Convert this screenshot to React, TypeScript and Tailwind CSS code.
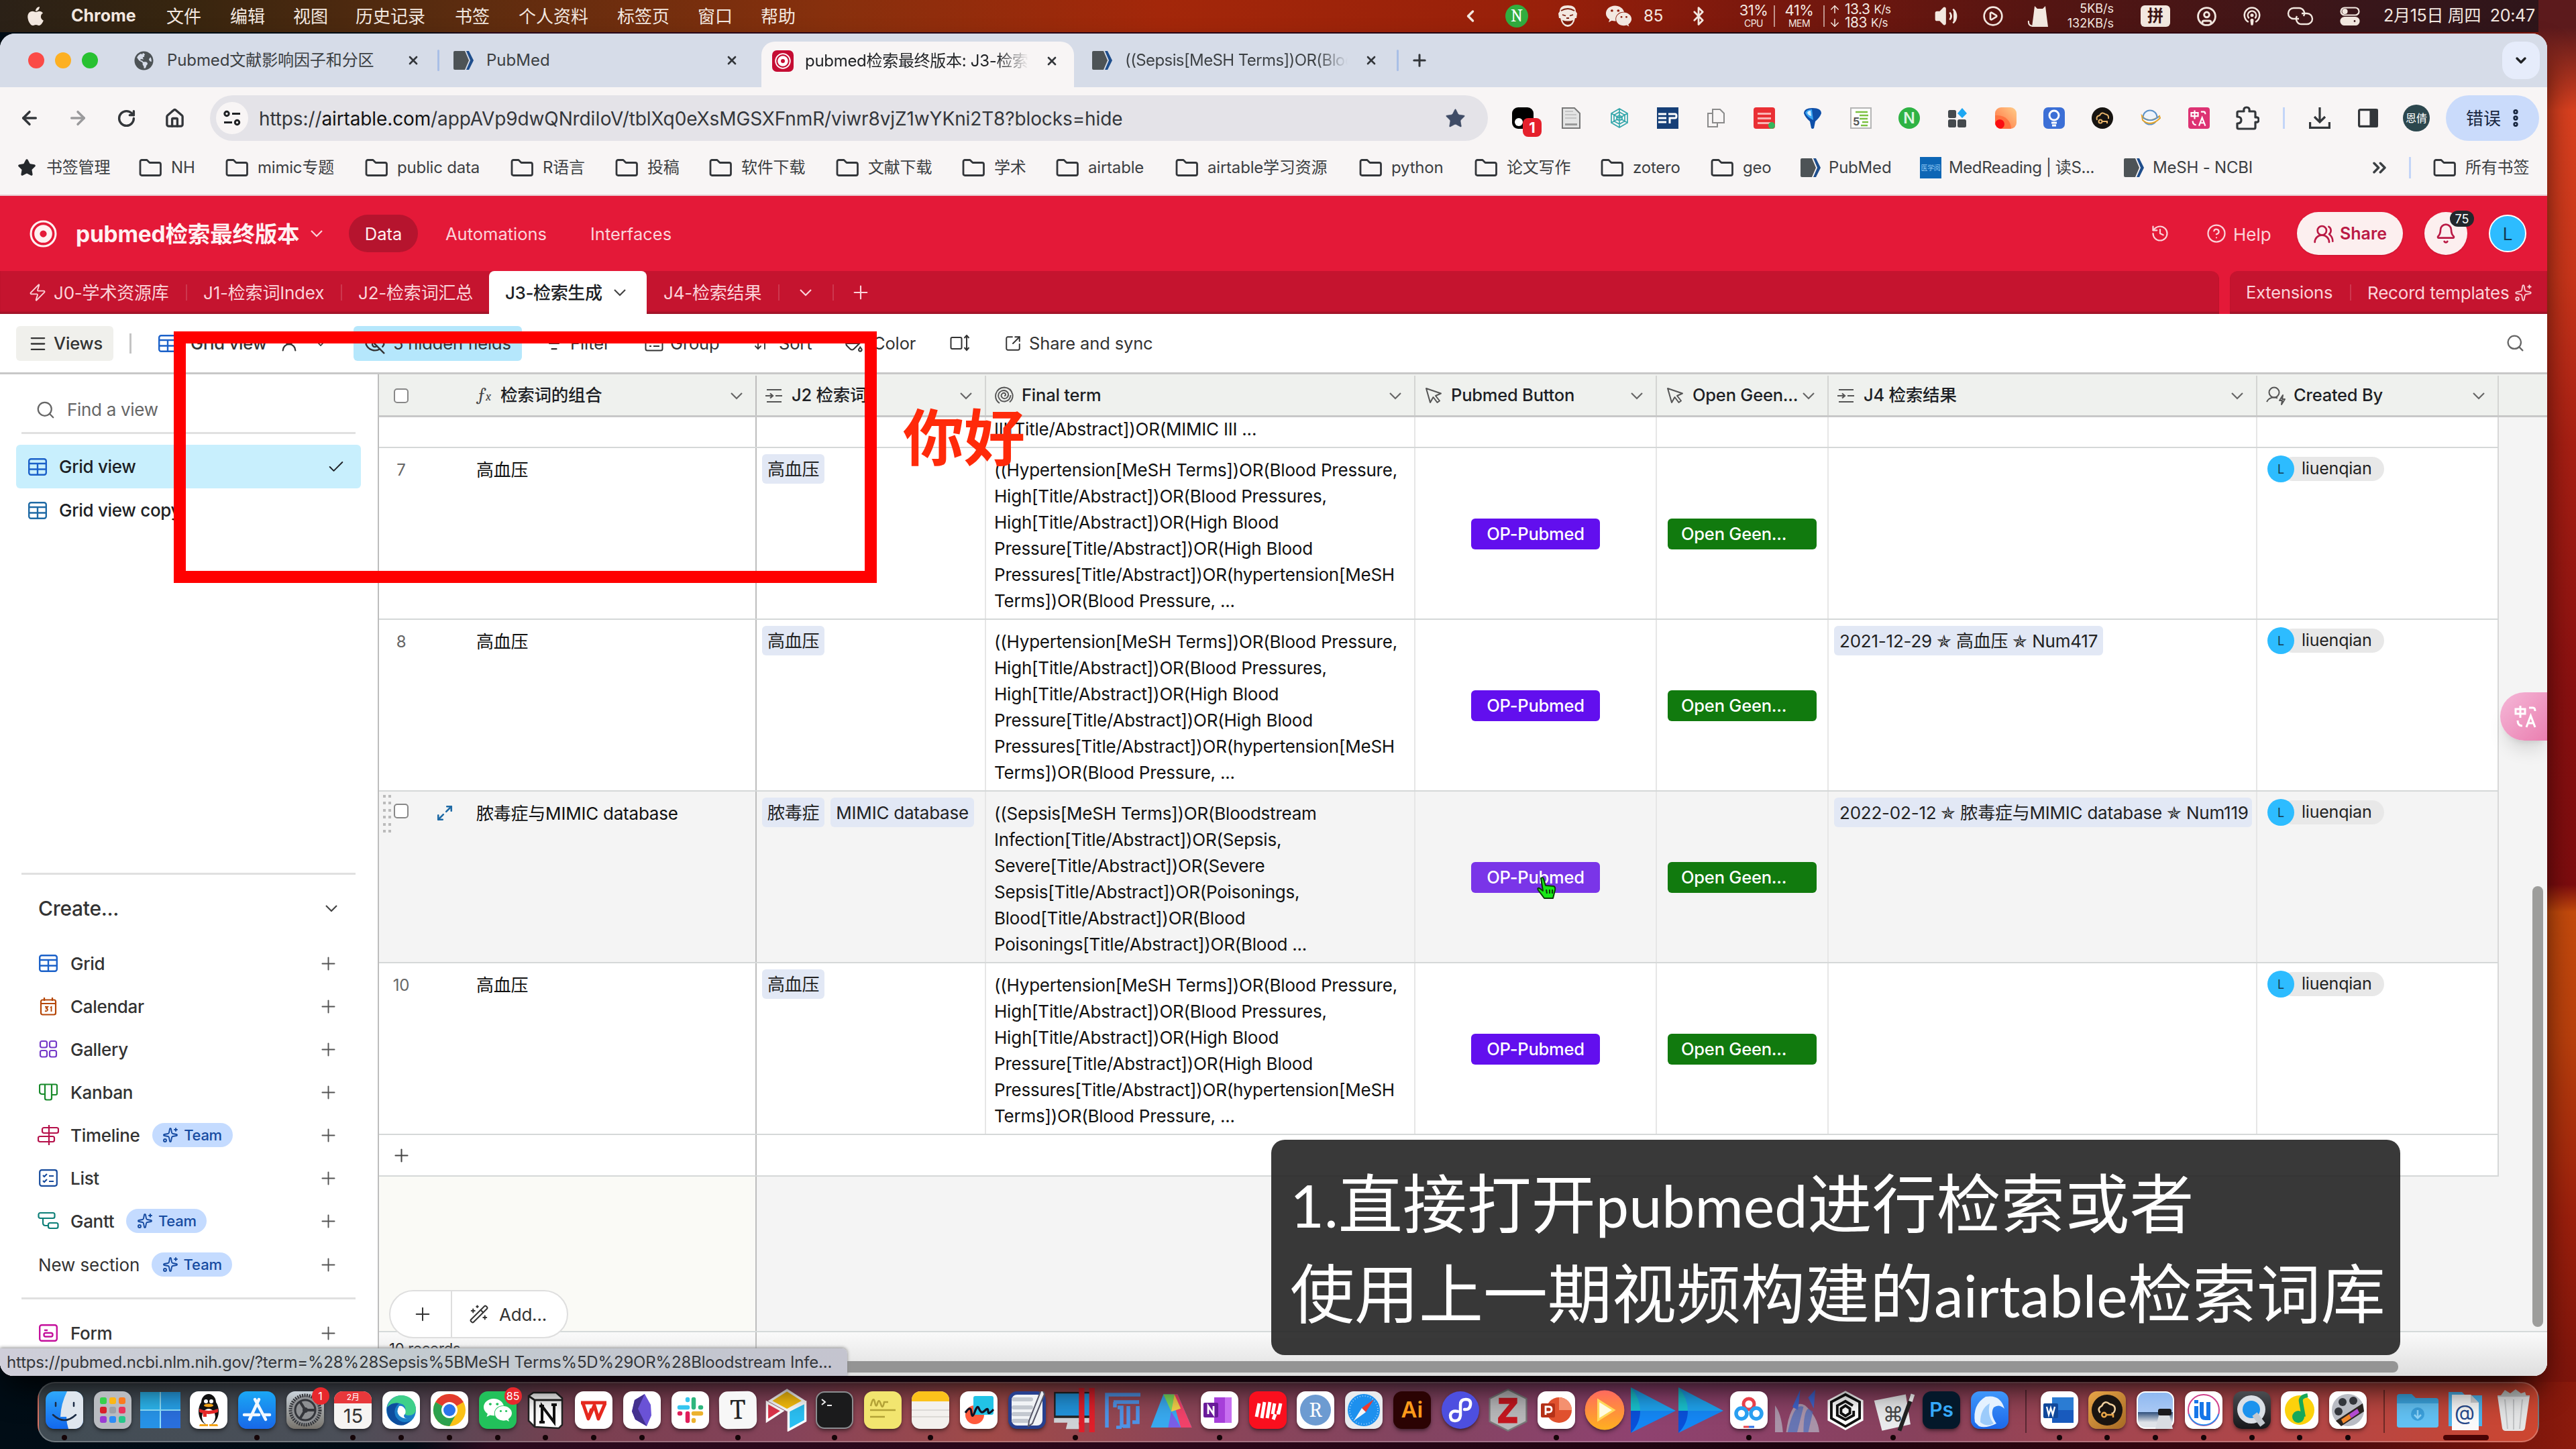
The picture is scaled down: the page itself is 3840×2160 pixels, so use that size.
import React from "react";
import {
  ArrowLeft, ArrowRight, RotateCw, House, Star, ChevronDown, ChevronLeft, ChevronsRight, Plus, X, Search,
  Check, Menu, EllipsisVertical, Bluetooth, Volume2, CirclePlay, CircleUser,
  History, CircleHelp, UsersRound, Bell, Zap, Sparkles, EyeOff, ListFilter, ArrowDownUp, PaintBucket,
  SquareArrowOutUpRight, UserRound, WandSparkles, Maximize2, ArrowUp, ArrowDown, Podcast,
} from "lucide-react";
import { FaApple, FaWeixin, FaGlobeAmericas } from "react-icons/fa";

type Kids = { children?: React.ReactNode };

/* ---------- small shared drawings ---------- */

const Box = ({ c, children }: { c: string } & Kids) => (
  <div className={"flex shrink-0 items-center justify-center " + c}>{children}</div>
);

const NcbiMark = () => (
  <svg viewBox="0 0 32 28" className="h-7 w-8 shrink-0">
    <path d="M1 2q0-2 2-2h15l6 14-6 14H3q-2 0-2-2z" fill="#4d5356" />
    <path d="M20 0h4l7 14-7 14h-4l6-14z" fill="#1f4e8c" />
  </svg>
);

const BaseMark = ({ c }: { c: string }) => (
  <svg viewBox="0 0 40 40" className={"shrink-0 " + c} fill="none" stroke="currentColor">
    <circle cx="20" cy="20" r="18" strokeWidth="3" />
    <circle cx="20" cy="20" r="9" strokeWidth="8" />
  </svg>
);

const GridIcon = ({ c }: { c: string }) => (
  <svg viewBox="0 0 28 26" className={"h-[26px] w-7 shrink-0 " + c} fill="none" stroke="currentColor" strokeWidth="2.4">
    <rect x="1.2" y="1.2" width="25.6" height="23.6" rx="3" />
    <path d="M1 8h26M1 16.5h26M14 8v17" />
  </svg>
);

const CalendarIcon = () => (
  <svg viewBox="0 0 28 28" className="size-7 shrink-0 text-[#b54708]" fill="none" stroke="currentColor" strokeWidth="2.2">
    <rect x="3" y="4.500" width="22" height="22" rx="2.500" />
    <path d="M3 10h22M8 1v5M20 1v5" />
    <path d="M9 15h4l-2 2.500q3 .5 1.500 3-1 1.200-3.500.5M17 16l1.500-1v7" strokeWidth="1.900" />
  </svg>
);

const GalleryIcon = () => (
  <svg viewBox="0 0 28 28" className="size-7 shrink-0 text-[#7438c8]" fill="none" stroke="currentColor" strokeWidth="2.200">
    <rect x="2" y="2" width="10" height="9.500" rx="2.500" />
    <rect x="16" y="2" width="10" height="9.500" rx="2.500" />
    <rect x="2" y="16" width="10" height="9.500" rx="2.500" />
    <rect x="16" y="16" width="10" height="9.500" rx="2.500" />
  </svg>
);

const KanbanIcon = () => (
  <svg viewBox="0 0 28 26" className="h-[26px] w-7 shrink-0 text-[#188a2a]" fill="none" stroke="currentColor" strokeWidth="2.200">
    <path d="M3 1.500h22q2 0 2 2V15q0 2-2 2h-5M9 16H5q-4 0-4-4V3.500q0-2 2-2" />
    <path d="M9 1.500V22q0 2.500 2.500 2.500h5Q19 24.500 19 22V1.500" />
  </svg>
);

const TimelineIcon = () => (
  <svg viewBox="0 0 32 32" className="size-8 shrink-0 text-[#b5104a]" fill="none" stroke="currentColor" strokeWidth="2.200">
    <path d="M17 1v30" />
    <rect x="7" y="5" width="24" height="8" rx="2.500" />
    <rect x="1" y="18" width="24" height="8" rx="2.500" />
  </svg>
);

const ListIcon = () => (
  <svg viewBox="0 0 28 26" className="h-[26px] w-7 shrink-0 text-[#164a9c]" fill="none" stroke="currentColor" strokeWidth="2.200">
    <rect x="1.200" y="1.200" width="25.600" height="23.600" rx="3" />
    <path d="M6 9l2 2 4-4M6 17l2 2 4-4M15 10h7M15 18h7" />
  </svg>
);

const GanttIcon = () => (
  <svg viewBox="0 0 32 28" className="h-7 w-8 shrink-0 text-[#0d7f78]" fill="none" stroke="currentColor" strokeWidth="2.200">
    <rect x="1.500" y="2" width="24" height="8" rx="2.500" />
    <rect x="16" y="17" width="14.500" height="8" rx="2.500" />
    <path d="M8 10v7q0 4 4 4h4" />
  </svg>
);

const FormIcon = () => (
  <svg viewBox="0 0 28 26" className="h-[26px] w-7 shrink-0 text-[#c4109c]" fill="none" stroke="currentColor" strokeWidth="2.400">
    <rect x="1.200" y="1.200" width="25.600" height="23.600" rx="3" />
    <path d="M8 9h5" />
    <rect x="7.500" y="13" width="13" height="5.500" rx="2.500" />
  </svg>
);

const LookupIcon = () => (
  <svg viewBox="0 0 28 24" className="h-6 w-7 shrink-0" fill="none" stroke="currentColor" strokeWidth="2.200">
    <path d="M1 12h10M8 8.500l4 3.500-4 3.500M3 3h22M16 12h10M3 21h22" />
  </svg>
);

const SpiralIcon = () => (
  <svg viewBox="0 0 28 28" className="size-7 shrink-0" fill="none" stroke="currentColor" strokeWidth="1.900">
    <path d="M14 14q2.500 0 2-2.500-1-2.500-4-1.500-3.500 2-2 5.500 2.500 4 7 2 4.500-3 2.500-8Q16 4.500 10.500 6.500 4 9.500 5.500 16q2.500 7 9.500 6.500 8-1.500 8.500-9.500M7 25Q-.5 20 1.500 11 4.500 2 14 1.500 24 2 26.500 12q1 7-4.500 11.500" />
  </svg>
);

const PointerIcon = () => (
  <svg viewBox="0 0 26 26" className="size-[26px] shrink-0" fill="none" stroke="currentColor" strokeWidth="2" strokeLinejoin="round">
    <path d="M2 2l6 21 4.500-8 6 8 3.500-2.500-6-7.500 8-3.500z" />
  </svg>
);

const CreatorIcon = () => (
  <svg viewBox="0 0 30 30" className="size-[30px] shrink-0" fill="none" stroke="currentColor" strokeWidth="2" strokeLinejoin="round">
    <circle cx="12" cy="10" r="7.500" />
    <path d="M1 24q3-6.500 11-6.500 3 0 5 1" />
    <path d="M25 14l-5 8h4l-1 6 5-8h-4z" />
  </svg>
);

const GroupIcon = () => (
  <svg viewBox="0 0 28 26" className="h-[26px] w-7 shrink-0" fill="none" stroke="currentColor" strokeWidth="2">
    <rect x="1.500" y="2.500" width="25" height="21" rx="2.500" />
    <path d="M7 9h3M13 9h9M7 17h3M13 17h9" />
  </svg>
);

const Chev = ({ c }: { c: string }) => (
  <svg viewBox="0 0 20 12" className={"h-3 w-5 shrink-0 " + c} fill="none" stroke="currentColor" strokeWidth="2.200">
    <path d="M2 2l8 8 8-8" />
  </svg>
);

const BookFolder = () => (
  <svg viewBox="0 0 34 26" className="h-[26px] w-[34px] shrink-0" fill="none" stroke="#33363a" strokeWidth="2.800" strokeLinejoin="round">
    <path d="M2 4q0-2.500 2.500-2.500H12l4 4h14q2.500 0 2.500 2.500v14q0 2.500-2.500 2.500H4.500Q2 24.500 2 22z" />
  </svg>
);

const TranslateMark = ({ c }: { c: string }) => (
  <svg viewBox="0 0 36 36" className={"shrink-0 " + c} fill="none" stroke="#fff" strokeWidth="3">
    <path d="M2 7h14v7H2zM9 2v18M22 5h6q3 0 3 5M5 24q0 8 7 8M18 34l6.500-17L31 34M20 28h9" />
  </svg>
);

/* ---------- system menu bar ---------- */

const menus: [string, string][] = [
  ["文件", "w-[95px]"], ["编辑", "w-[94px]"], ["视图", "w-[93px]"], ["历史记录", "w-[148px]"], ["书签", "w-[95px]"],
  ["个人资料", "w-[147px]"], ["标签页", "w-[120px]"], ["窗口", "w-[94px]"], ["帮助", "w-[95px]"],
];

const MenuBar = () => (
  <div className="flex h-12 shrink-0 items-center overflow-hidden bg-[linear-gradient(90deg,#2b2117_0%,#37250f_7%,#5c2c0f_18%,#87300d_32%,#a3270a_45%,#98200a_60%,#7b180d_68%,#551512_79%,#38161a_92%,#2c151a_100%)] text-[26px] whitespace-nowrap text-[#f3e8e0]">
    <Box c="w-[106px]"><FaApple className="size-8" /></Box>
    <div className="w-[142px] text-[25px] font-bold">Chrome</div>
    {menus.map(([t, w]) => <div key={t} className={"shrink-0 " + w}>{t}</div>)}
    <div className="w-[939px] shrink-0" />
    <Box c="w-12"><ChevronLeft className="size-7" strokeWidth={3} /></Box>
    <Box c="w-[90px]"><Box c="size-[34px] rounded-full bg-[#31ad3f] font-serif text-[26px] text-white">N</Box></Box>
    <Box c="w-[62px]">
      <svg viewBox="0 0 32 34" className="h-[34px] w-8">
        <path d="M4 10Q4 1 16 1t12 9l2 3-1 7h-2q-2 12-11 13Q7 32 5 20H3l-1-7z" fill="#f3e8e0" />
        <path d="M6 9Q16 3 26 9M8 15l5 1.500M24 15l-5 1.500M14 20h4" stroke="#7a1c0c" strokeWidth="1.800" fill="none" />
        <path d="M8 23q8 3 16 0-2 7-8 7t-8-7z" fill="#7a1c0c" />
      </svg>
    </Box>
    <Box c="w-[90px]"><FaWeixin className="size-10" /></Box>
    <div className="-ml-2 w-[50px] text-[24px]">85</div>
    <Box c="w-16"><Bluetooth className="size-[30px]" strokeWidth={2.2} /></Box>
    <div className="ml-5 flex w-[60px] flex-col items-center text-[22px] leading-[21px] tracking-[-0.5px]"><span>31%</span><span className="text-[14px] leading-[17px]">CPU</span></div>
    <div className="h-8 w-0.5 bg-[#f3e8e0]/60" />
    <div className="flex w-[72px] flex-col items-center text-[22px] leading-[21px] tracking-[-0.5px]"><span>41%</span><span className="text-[14px] leading-[17px]">MEM</span></div>
    <div className="h-8 w-0.5 bg-[#f3e8e0]/60" />
    <div className="ml-1.5 w-[133px] text-[21px] leading-5 tracking-[-0.5px]">
      <div className="flex items-center gap-1.5"><ArrowUp className="size-[18px]" />13.3 <span className="text-[17px]">K/s</span></div>
      <div className="flex items-center gap-1.5"><ArrowDown className="size-[18px]" />183 <span className="text-[17px]">K/s</span></div>
    </div>
    <Box c="w-[84px]"><Volume2 className="size-9" fill="currentColor" strokeWidth={1.800} /></Box>
    <Box c="w-14"><CirclePlay className="size-8" strokeWidth={2} /></Box>
    <Box c="w-20">
      <svg viewBox="0 0 34 34" className="size-[34px]" fill="#f3e8e0"><path d="M11 2l4 4h8l4-4 2 16 2 15H7l2-15z" /><path d="M8 32Q1 31 2 24" fill="none" stroke="#f3e8e0" strokeWidth="2" /></svg>
    </Box>
    <div className="w-[72px] text-right text-[18px] leading-[22px]"><div>5KB/s</div><div>132KB/s</div></div>
    <Box c="ml-10 h-8 w-11 rounded-md bg-[#f3e8e0] text-[24px] font-bold text-[#3a1413]">拼</Box>
    <Box c="ml-[18px] w-[72px]"><CircleUser className="size-[31px]" strokeWidth={2.200} /></Box>
    <Box c="w-16"><Podcast className="size-[30px]" strokeWidth={2} /></Box>
    <Box c="w-20">
      <svg viewBox="0 0 44 28" className="h-7 w-11" fill="none" stroke="#f3e8e0" strokeWidth="2.400">
        <path d="M20 18h-8a8 8 0 0 1 0-16h8a8 8 0 0 1 7 12" />
        <path d="M24 10h8a8 8 0 0 1 0 16h-8a8 8 0 0 1-7-12" />
      </svg>
    </Box>
    <Box c="w-[68px]">
      <svg viewBox="0 0 30 28" className="h-7 w-[30px]" fill="none" stroke="#f3e8e0" strokeWidth="2.200">
        <rect x="1.500" y="1.500" width="27" height="11" rx="5.500" /><circle cx="7.500" cy="7" r="3" fill="#f3e8e0" />
        <rect x="1.500" y="16" width="27" height="11" rx="5.500" fill="#f3e8e0" /><circle cx="22" cy="21.500" r="2.500" fill="#38161a" />
      </svg>
    </Box>
    <div className="ml-4 text-[25px] tracking-[-0.3px]">2月15日 周四&nbsp; 20:47</div>
  </div>
);

/* ---------- browser chrome ---------- */

const CloseX = () => <X className="size-5 shrink-0 text-[#33363a]" strokeWidth={3.200} />;

const TabStrip = () => (
  <div className="flex h-20 shrink-0 items-center bg-[#d6dce8] text-[24px] whitespace-nowrap text-[#3c4043]">
    <div className="flex w-[200px] gap-4 pl-[42px]">
      <div className="size-6 rounded-full bg-[#fb4b47]" />
      <div className="size-6 rounded-full bg-[#fdb022]" />
      <div className="size-6 rounded-full bg-[#28c131]" />
    </div>
    <FaGlobeAmericas className="size-[29px] text-[#4d5356]" />
    <div className="ml-5 w-[357px] tracking-[-0.1px]">Pubmed文献影响因子和分区</div>
    <CloseX />
    <div className="ml-[26px] h-8 w-[3px] rounded bg-[#a9bfe6]" />
    <div className="ml-[20px]"><NcbiMark /></div>
    <div className="ml-[18px] w-[356px]">PubMed</div>
    <CloseX />
    <div className="ml-[34px] flex h-[68px] w-[466px] items-center self-end rounded-t-[20px] bg-[#f8f5f5] pb-2.5 text-[#1f2124]">
      <Box c="ml-4 size-8 rounded-[7px] bg-[#c50d33]"><BaseMark c="size-6 text-white" /></Box>
      <div className="ml-[17px] w-[334px] overflow-hidden bg-[linear-gradient(90deg,#1f2124_86%,transparent)] bg-clip-text tracking-[-0.3px] text-transparent">pubmed检索最终版本: J3-检索生成</div>
      <div className="ml-6"><CloseX /></div>
    </div>
    <div className="ml-[26px]"><NcbiMark /></div>
    <div className="ml-[18px] w-[332px] overflow-hidden bg-[linear-gradient(90deg,#3c4043_86%,transparent)] bg-clip-text tracking-[-0.6px] text-transparent">((Sepsis[MeSH Terms])OR(Bloodstream</div>
    <div className="ml-[25px]"><CloseX /></div>
    <div className="ml-[28px] h-8 w-[3px] rounded bg-[#a9bfe6]" />
    <Plus className="ml-[17px] size-7 text-[#33363a]" strokeWidth={2.600} />
    <div className="grow" />
    <Box c="mr-[11px] size-14 rounded-[20px] bg-[#e6ecfb]"><ChevronDown className="size-6 text-[#1f2124]" strokeWidth={3.400} /></Box>
  </div>
);

const extIcons: React.ReactNode[] = [
  <div className="relative size-8 rounded-[9px] bg-black"><div className="absolute bottom-1 left-1 size-3 rounded-full bg-white" /><div className="absolute top-4 left-4 flex h-7 w-7 items-center justify-center rounded-lg bg-[#e5202c] text-[22px] font-bold text-white">1</div></div>,
  <svg viewBox="0 0 28 32" className="h-8 w-7"><path d="M1 1h18l8 8v22H1z" fill="#e4e4e4" stroke="#777" strokeWidth="2" /><path d="M5 24h18v3H5z" fill="#999" /><path d="M5 6h12M5 11h17M5 16h17" stroke="#c4c4c4" strokeWidth="2" /></svg>,
  <svg viewBox="0 0 32 32" className="size-8" fill="none" stroke="#35a7ab" strokeWidth="1.700"><path d="M16 2l12 7v14l-12 7-12-7V9zM16 7l8 4.500v9L16 25l-8-4.500v-9zM16 12l4 2v4l-4 2-4-2v-4zM16 2v28M4 9l24 14M28 9L4 23" /></svg>,
  <Box c="size-8 bg-[#163f77]"><svg viewBox="0 0 32 32" className="size-8" fill="none" stroke="#fff" strokeWidth="3"><path d="M2 10h12M2 16h12M2 22h12M17 10h10q2 0 2 3t-2 3H19v8" /></svg></Box>,
  <svg viewBox="0 0 26 30" className="h-[30px] w-[26px]" fill="#f8f5f5" stroke="#8a8a8a" strokeWidth="2"><path d="M1 8h14v20H1z" /><path d="M8 2h11l6 6v14H8z" /></svg>,
  <Box c="relative size-8 rounded bg-[#ea2f34]"><div className="flex flex-col gap-1"><div className="h-[3px] w-5 bg-[#f9b4b4]" /><div className="h-[3px] w-5 bg-[#f9b4b4]" /><div className="h-[3px] w-5 bg-[#f9b4b4]" /></div><div className="absolute right-0 bottom-0 size-2.5 rounded-full bg-[#36b55c]" /></Box>,
  <svg viewBox="0 0 30 32" className="h-8 w-[30px]"><path d="M2 9q0-8 13-8t13 8q-2 6-9 12l-2 10q-2 2-4 0l-2-10Q4 15 2 9z" fill="#0f4fa8" /><path d="M4 8q2-5 10-5l2 16Q6 14 4 8z" fill="#3aa5f4" /><path d="M7 8q1-3 5-3l1 8Q8 12 7 8z" fill="#d5eeff" /></svg>,
  <svg viewBox="0 0 32 32" className="size-8"><rect x="1" y="1" width="30" height="30" fill="#fff" stroke="#b5b5b5" strokeWidth="2" /><path d="M8 7h18M14 12h13M14 17h12M18 22h9M16 27h10" stroke="#7cc142" strokeWidth="2.600" /><text x="4" y="27" fontSize="16" fontWeight="700" fill="#555">5</text></svg>,
  <Box c="size-8 rounded-full bg-[#2fb344] text-[23px] font-semibold text-[#dff5e2]">N</Box>,
  <svg viewBox="0 0 30 30" className="size-[30px]" fill="#45494d"><rect x="1" y="3" width="12" height="12" rx="2.500" /><rect x="1" y="17" width="12" height="12" rx="2.500" /><rect x="15" y="17" width="13" height="12" rx="2.500" /><path d="M22 0l7 8-7 7-7-7z" fill="#1ea7f2" /></svg>,
  <div className="relative size-8 overflow-hidden rounded-[9px] bg-[linear-gradient(45deg,#ff6a3c,#ffce8a)]"><div className="absolute bottom-0 left-0 h-5 w-6 rounded-tr-full bg-[#ff7340]" /><div className="absolute bottom-0 left-0 size-3.5 rounded-full bg-[#fb0d12]" /></div>,
  <Box c="size-8 rounded-[7px] bg-[#3c6fd6]"><svg viewBox="0 0 24 26" className="h-[26px] w-6" fill="none" stroke="#fff" strokeWidth="3"><circle cx="12" cy="9" r="7" /><path d="M8 20h8M9 24h6" /></svg></Box>,
  <Box c="size-8 rounded-full bg-[#171411]"><svg viewBox="0 0 24 24" className="size-6" fill="none" stroke="#e8b46a" strokeWidth="2"><path d="M4 15q-2-6 4-7 3-6 8-2 6 1 5 7" /><circle cx="9" cy="17" r="2.500" /><path d="M12 17h7v3" /></svg></Box>,
  <svg viewBox="0 0 32 26" className="h-[26px] w-8" fill="none"><circle cx="15" cy="12" r="10.500" fill="#eef4fb" stroke="#5d93c9" strokeWidth="2" /><path d="M3 10q10 12 26 0l1 3Q16 27 4 16z" fill="#fff" stroke="#e3a42c" strokeWidth="2" /><path d="M4 12q12 9 24-1" stroke="#5d93c9" strokeWidth="2" /></svg>,
  <Box c="size-8 rounded bg-[#dd3273]"><TranslateMark c="size-[26px]" /></Box>,
  <svg viewBox="0 0 36 36" className="size-9" fill="none" stroke="#33363a" strokeWidth="3.200" strokeLinejoin="round"><path d="M3 10q0-2 2-2h8q-1-6 4-6t4 6h7q2 0 2 2v7q5-1 5 3.500T30 24v8q0 2-2 2H5q-2 0-2-2v-6q6 0 6-5t-6-5z" /></svg>,
];

const AddressBar = () => (
  <div className="flex h-[92px] shrink-0 items-center bg-[#f8f5f5] text-[#33363a]">
    <Box c="ml-2 w-[72px]"><ArrowLeft className="size-8" strokeWidth={2.600} /></Box>
    <Box c="w-[72px]"><ArrowRight className="size-8 text-[#9a9a9c]" strokeWidth={2.600} /></Box>
    <Box c="w-[72px]"><RotateCw className="size-[29px]" strokeWidth={2.800} /></Box>
    <Box c="w-[72px]"><House className="size-[31px]" strokeWidth={2.600} /></Box>
    <div className="ml-[17px] flex h-[68px] w-[1905px] items-center rounded-full bg-[#e4e3e8] text-[28px] whitespace-nowrap">
      <Box c="ml-[9px] size-12 rounded-full bg-[#f8f5f5]">
        <svg viewBox="0 0 26 24" className="h-6 w-[26px]" fill="none" stroke="#1f2124" strokeWidth="3"><circle cx="5" cy="5.500" r="3.200" /><path d="M13 5.500h12M1 18.500h12" /><circle cx="20.500" cy="18.500" r="3.200" /></svg>
      </Box>
      <div className="ml-4 w-[1767px] pt-0.5 tracking-[-0.12px]">https://<span className="text-[#111]">airtable.com</span>/appAVp9dwQNrdiIoV/tblXq0eXsMGSXFnmR/viwr8vjZ1wYKni2T8?blocks=hide</div>
      <Star className="size-[33px] text-[#3f4c66]" fill="currentColor" strokeWidth={0.500} />
    </div>
    <div className="ml-4 flex">
      {extIcons.map((n, i) => <Box key={i} c="h-12 w-[72px]">{n}</Box>)}
    </div>
    <div className="ml-[17px] h-8 w-[3px] bg-[#c3d5f8]" />
    <Box c="ml-4 w-[72px]">
      <svg viewBox="0 0 32 32" className="size-8" fill="none" stroke="#33363a" strokeWidth="3.200"><path d="M16 0v21M8 14l8 8 8-8M1.600 22v8.400h28.800V22" /></svg>
    </Box>
    <Box c="w-[72px]">
      <svg viewBox="0 0 30 28" className="h-7 w-[30px]" fill="none" stroke="#33363a" strokeWidth="3.200"><rect x="1.600" y="1.600" width="26.800" height="24.800" rx="2" /><path d="M19 2h9v24h-9z" fill="#33363a" /></svg>
    </Box>
    <Box c="w-[72px]"><Box c="size-10 rounded-full bg-[#2c474e] text-[16px] text-white">恩倩</Box></Box>
    <div className="ml-2 flex h-[68px] w-[139px] items-center rounded-full bg-[#cadbfb] pl-[30px] text-[26px] whitespace-nowrap text-[#17263f]">
      错误<EllipsisVertical className="ml-1.5 size-8" strokeWidth={3.500} />
    </div>
  </div>
);

const bookmarks: [string, string][] = [
  ["NH", "w-[129px]"], ["mimic专题", "w-[208px]"], ["public data", "w-[217px]"], ["R语言", "w-[156px]"], ["投稿", "w-[140px]"],
  ["软件下载", "w-[189px]"], ["文献下载", "w-[188px]"], ["学术", "w-[140px]"], ["airtable", "w-[178px]"],
  ["airtable学习资源", "w-[274px]"], ["python", "w-[172px]"], ["论文写作", "w-[188px]"], ["zotero", "w-[164px]"], ["geo", "w-[133px]"],
];

const Bookmarks = () => (
  <div className="flex h-[70px] shrink-0 items-center border-b-2 border-[#e9ccd2] bg-[#f8f5f5] pb-3 text-[24px] tracking-[-0.2px] whitespace-nowrap text-[#3c4043]">
    <Star className="ml-[26px] size-7 text-[#25282c]" fill="currentColor" />
    <div className="ml-[15px] w-[138px]">书签管理</div>
    {bookmarks.map(([t, w]) => (
      <div key={t} className={"flex shrink-0 items-center gap-[14px] " + w}><BookFolder />{t}</div>
    ))}
    <div className="flex w-[179px] shrink-0 items-center gap-[11px]"><NcbiMark />PubMed</div>
    <div className="flex w-[303px] shrink-0 items-center gap-[11px] tracking-[-0.4px]"><Box c="size-8 bg-[#0d66b5] text-[10px] text-[#8ec6f3]">医学阅</Box>MedReading | 读S...</div>
    <div className="flex w-[366px] shrink-0 items-center gap-[12px]"><NcbiMark />MeSH - NCBI</div>
    <ChevronsRight className="size-8" strokeWidth={2.600} />
    <div className="mr-[33px] ml-[28px] h-8 w-[3px] bg-[#c3d5f8]" />
    <BookFolder /><span className="ml-3.5">所有书签</span>
  </div>
);

/* ---------- base header ---------- */

const BaseHeader = () => (
  <div className="flex h-28 shrink-0 items-center bg-[#e41938] text-[25px] whitespace-nowrap text-[#fbd3d9]">
    <BaseMark c="ml-11 size-[41px] text-[#fff0f1]" />
    <div className="ml-7 w-[349px] pt-0.5 text-[33.5px] font-bold tracking-[-0.2px] text-[#fff0f1]">pubmed检索最终版本</div>
    <Chev c="text-[#fbd3d9]" />
    <Box c="ml-[38px] h-14 w-[103px] rounded-full bg-[#b6142e] pt-0.5 text-[25.5px] text-[#fff0f1]">Data</Box>
    <div className="ml-[41px] w-[216px] pt-0.5 text-[25.5px]">Automations</div>
    <div className="pt-0.5 text-[25.5px]">Interfaces</div>
    <div className="grow" />
    <History className="size-7" strokeWidth={1.900} />
    <CircleHelp className="ml-[55px] size-[30px]" strokeWidth={1.800} />
    <div className="ml-2.5 w-[95px] pt-0.5 text-[26px]">Help</div>
    <Box c="h-16 w-[158px] rounded-full bg-[#fcefef] pt-0.5 font-semibold text-[#ba1a45] shadow">
      <UsersRound className="mr-2 size-8" strokeWidth={2} />Share
    </Box>
    <Box c="relative ml-8 size-16 rounded-full bg-[#fcefef] text-[#ba1a45] shadow">
      <Bell className="size-8" strokeWidth={2} />
      <Box c="absolute -top-0.5 -right-2.5 h-6 w-9 rounded-full bg-[#23272c] text-[18px] text-white">75</Box>
    </Box>
    <Box c="mr-[31px] ml-8 size-14 rounded-full border-2 border-white bg-[#2dbcff] text-[26px] text-[#143a50]">L</Box>
  </div>
);

const Vbar = ({ c }: { c: string }) => <div className={"h-6 w-0.5 shrink-0 bg-white/15 " + c} />;

const TableTabs = () => (
  <div className="flex h-16 shrink-0 bg-[#e41938] text-[26px] tracking-[-0.2px] whitespace-nowrap text-[#fbd3d9]">
    <div className="flex w-[3308px] items-center rounded-tr-xl bg-[#c5142f] shadow-[inset_0_-4px_3px_-1px_#9c1428]">
      <Zap className="ml-[42px] size-7" strokeWidth={1.600} />
      <div className="ml-2.5 w-[197px]">J0-学术资源库</div><Vbar c="" />
      <div className="ml-[24px] w-[205px]">J1-检索词Index</div><Vbar c="" />
      <div className="ml-6 w-[195px]">J2-检索词汇总</div>
      <div className="flex h-full w-[235px] items-center rounded-t-lg bg-white pl-6 font-medium tracking-[-0.4px] text-[#1d1f25]">
        <div className="w-[161px]">J3-检索生成</div><Chev c="text-[#444]" />
      </div>
      <div className="ml-[25px] w-[171px]">J4-检索结果</div><Vbar c="" />
      <Chev c="ml-[29px]" /><Vbar c="ml-[30px]" />
      <Plus className="ml-[24px] size-8" strokeWidth={1.600} />
    </div>
    <div className="ml-4 flex grow items-center rounded-tl-xl bg-[#c5142f] pl-6 shadow-[inset_0_-4px_3px_-1px_#9c1428]">
      <div className="w-[155px] text-[25.5px]">Extensions</div><Vbar c="" />
      <div className="ml-6 w-[219px]">Record templates</div>
      <Sparkles className="size-[27px]" strokeWidth={1.600} />
    </div>
  </div>
);

const ViewBar = () => (
  <div className="flex h-[90px] shrink-0 items-center border-b-[3px] border-[#c8c8c8] bg-white text-[25.5px] tracking-[-0.15px] whitespace-nowrap text-[#333]">
    <div className="ml-6 flex h-[52px] w-[145px] items-center rounded-md bg-[#f0f0ec] pt-0.5 pl-[18px] font-medium"><Menu className="mr-[9px] size-[29px]" strokeWidth={1.900} />Views</div>
    <div className="mr-10 ml-6 h-[30px] w-[3px] bg-[#c4c4c4]" />
    <GridIcon c="text-[#1b61c9]" />
    <div className="ml-[20px] w-[133px] pt-0.5 font-medium">Grid view</div>
    <UserRound className="size-7" strokeWidth={1.900} />
    <Chev c="ml-[23px] scale-75" />
    <div className="ml-[39px] flex h-[52px] w-[251px] items-center rounded-md bg-[#b5e7fc] pt-0.5 pl-4"><EyeOff className="mr-[11px] size-8" strokeWidth={1.800} />5 hidden fields</div>
    <ListFilter className="ml-[34px] size-7" strokeWidth={1.800} /><div className="ml-2.5 w-[111px] pt-0.5">Filter</div>
    <GroupIcon /><div className="ml-2.5 w-[124px] pt-0.5">Group</div>
    <ArrowDownUp className="size-6" strokeWidth={1.800} /><div className="ml-3.5 w-[98px] pt-0.5">Sort</div>
    <PaintBucket className="size-7" strokeWidth={1.800} /><div className="ml-3.5 w-[115px] pt-0.5">Color</div>
    <svg viewBox="0 0 30 26" className="h-[26px] w-[30px]" fill="none" stroke="#333" strokeWidth="2"><rect x="1.500" y="4" width="16" height="17" rx="2" /><path d="M25 1v22M21.500 5L25 1l3.500 4M21.500 19l3.500 4 3.500-4" /></svg>
    <SquareArrowOutUpRight className="ml-[51px] size-[26px]" strokeWidth={1.800} />
    <div className="ml-[11px] pt-0.5">Share and sync</div>
    <div className="grow" />
    <Search className="mr-[33px] size-[29px] text-[#666]" strokeWidth={1.900} />
  </div>
);

/* ---------- sidebar ---------- */

const Team = () => (
  <Box c="ml-[18px] h-9 w-[120px] gap-2 rounded-full bg-[#c4dbff] text-[22px] font-medium text-[#154aa0]"><Sparkles className="size-6" strokeWidth={1.900} />Team</Box>
);

const creators: [string, React.ReactNode, boolean][] = [
  ["Grid", <GridIcon c="text-[#1b61c9]" />, false],
  ["Calendar", <CalendarIcon />, false],
  ["Gallery", <GalleryIcon />, false],
  ["Kanban", <KanbanIcon />, false],
  ["Timeline", <TimelineIcon />, true],
  ["List", <ListIcon />, false],
  ["Gantt", <GanttIcon />, true],
];

const AddPlus = () => <Plus className="mr-[58px] ml-auto size-[31px] text-[#555]" strokeWidth={1.500} />;

const Sidebar = () => (
  <div className="flex w-[565px] shrink-0 flex-col overflow-hidden border-r-2 border-[#bdbdbd] bg-white text-[26px] tracking-[-0.3px] whitespace-nowrap text-[#333]">
    <div className="mr-[33px] ml-8 flex h-[89px] shrink-0 items-center border-b-[3px] border-[#e0e0e0] pt-[19px] text-[#666]">
      <Search className="ml-[21px] size-[30px]" strokeWidth={1.800} /><span className="ml-[17px] text-[26px]">Find a view</span>
    </div>
    <div className="mt-4 ml-6 flex h-[65px] w-[514px] shrink-0 items-center rounded-md bg-[#c8effd] pl-[18px] font-medium text-[#1d1f25]">
      <GridIcon c="text-[#1b61c9]" /><span className="ml-[18px] w-[399px]">Grid view</span><Check className="size-7" strokeWidth={1.600} />
    </div>
    <div className="ml-6 flex h-[65px] shrink-0 items-center pl-[18px] font-medium text-[#1d1f25]">
      <GridIcon c="text-[#1f6aa5]" /><span className="ml-[18px]">Grid view copy</span>
    </div>
    <div className="mt-[508px] mr-[33px] ml-8 h-[3px] shrink-0 bg-[#e0e0e0]" />
    <div className="flex h-[100px] shrink-0 items-center pl-[57px] text-[30px] font-medium">Create...<Chev c="mr-[59px] ml-auto text-[#444]" /></div>
    {creators.map(([t, icon, team]) => (
      <div key={t} className="flex h-16 shrink-0 items-center pl-14 font-medium">
        <Box c="w-8">{icon}</Box><span className="ml-[17px]">{t}</span>{team && <Team />}<AddPlus />
      </div>
    ))}
    <div className="flex h-[66px] shrink-0 items-center pl-[57px] tracking-[-0.1px]">New section<Team /><AddPlus /></div>
    <div className="mt-[16px] mr-[33px] ml-8 h-[3px] shrink-0 bg-[#e0e0e0]" />
    <div className="mt-[18px] flex h-16 shrink-0 items-center pl-14 font-medium">
      <Box c="w-8"><FormIcon /></Box><span className="ml-[17px]">Form</span><AddPlus />
    </div>
  </div>
);

/* ---------- data grid ---------- */

const hyper = [
  "((Hypertension[MeSH Terms])OR(Blood Pressure,", "High[Title/Abstract])OR(Blood Pressures,", "High[Title/Abstract])OR(High Blood",
  "Pressure[Title/Abstract])OR(High Blood", "Pressures[Title/Abstract])OR(hypertension[MeSH", "Terms])OR(Blood Pressure, ...",
];
const sepsis = [
  "((Sepsis[MeSH Terms])OR(Bloodstream", "Infection[Title/Abstract])OR(Sepsis,", "Severe[Title/Abstract])OR(Severe",
  "Sepsis[Title/Abstract])OR(Poisonings,", "Blood[Title/Abstract])OR(Blood", "Poisonings[Title/Abstract])OR(Blood ...",
];

type Row = { n: string; name: string; terms: string[]; links: string[]; result?: string; hover?: boolean };
const rows: Row[] = [
  { n: "7", name: "高血压", terms: hyper, links: ["高血压"] },
  { n: "8", name: "高血压", terms: hyper, links: ["高血压"], result: "2021-12-29 ✯ 高血压 ✯ Num417" },
  { n: "9", name: "脓毒症与MIMIC database", terms: sepsis, links: ["脓毒症", "MIMIC database"], result: "2022-02-12 ✯ 脓毒症与MIMIC database ✯ Num119", hover: true },
  { n: "10", name: "高血压", terms: hyper, links: ["高血压"] },
];

const cols = "grid grid-cols-[563px_342px_640px_360px_256px_639px_360px] shrink-0 w-[3160px]";

const Head = ({ icon, t, c }: { icon: React.ReactNode; t: string; c: string }) => (
  <div className={"flex items-center border-r-2 border-[#d4d5d3] " + c}>
    <Box c="mr-3 w-7 text-[#555]">{icon}</Box><span className="font-medium">{t}</span><Chev c="mr-[18px] ml-auto text-[#666]" />
  </div>
);

const Chip = ({ children }: Kids) => (
  <div className="flex h-11 items-center overflow-hidden rounded-md bg-[#e2e8f5] px-2 text-[#222]">{children}</div>
);

const CheckSquare = () => <div className="size-[22px] rounded-[5px] border-2 border-[#888] bg-white" />;

const GridRow = ({ r }: { r: Row }) => (
  <div className={cols + " h-64 border-b-2 border-[#d5d8d8] " + (r.hover ? "bg-[#f4f4f4]" : "bg-white")}>
    <div className="flex border-r-2 border-[#bdbdbd] pt-[13px]">
      {r.hover ? (
        <>
          <div className="-mt-2 grid h-14 w-[22px] grid-cols-2 content-between gap-x-1 pr-1 pl-1.5">
            {Array.from({ length: 12 }, (_, i) => <div key={i} className="size-1 bg-[#bbb]" />)}
          </div>
          <div className="pt-[5px]"><CheckSquare /></div>
          <Maximize2 className="mt-1.5 ml-[41px] size-[26px] text-[#1f6aa5]" strokeWidth={2.400} />
          <div className="ml-[34px] leading-[39px] text-[#111]">{r.name}</div>
        </>
      ) : (
        <>
          <div className="w-[66px] text-center text-[24px] leading-[39px] text-[#666]">{r.n}</div>
          <div className="ml-[79px] leading-[39px] text-[#111]">{r.name}</div>
        </>
      )}
    </div>
    <div className="flex items-start gap-[9px] border-r-2 border-[#e6e6e6] pt-[9px] pl-2">
      {r.links.map((l) => <Chip key={l}>{l}</Chip>)}
    </div>
    <div className="border-r-2 border-[#e6e6e6] pt-[13px] pl-[12px] leading-[39px] text-[#111]">
      {r.terms.map((l) => <div key={l}>{l}</div>)}
    </div>
    <div className="flex items-center justify-center border-r-2 border-[#e6e6e6] pt-0.5">
      <Box c={"h-[46px] w-48 rounded-md pt-px text-[25.5px] font-medium text-white " + (r.hover ? "bg-[#7a35e8]" : "bg-[#620fee]")}>OP-Pubmed</Box>
    </div>
    <div className="flex items-center justify-center border-r-2 border-[#e6e6e6] pt-0.5">
      <div className="flex h-[46px] w-[222px] items-center rounded-md bg-[#117a0e] pt-px pl-5 text-[25.5px] font-medium text-white">Open Geen...</div>
    </div>
    <div className="flex items-start border-r-2 border-[#e6e6e6] pt-[9px] pr-[6px] pl-2">
      {r.result && <Chip>{r.result}</Chip>}
    </div>
    <div className="border-r-2 border-[#d8d8d8] pt-[11px] pl-[15px]">
      <div className="flex items-center">
        <Box c="z-10 size-10 rounded-full bg-[#2dbcff] text-[18px] text-[#143a50]">L</Box>
        <div className="-ml-5 flex h-9 w-[154px] items-center rounded-full bg-[#e8e8e8] pl-[31px] text-[25px] text-[#222]">liuenqian</div>
      </div>
    </div>
  </div>
);

const DataGrid = () => (
  <div className="relative flex w-[3232px] shrink-0 flex-col overflow-hidden bg-[#f4f4f4] text-[26px] tracking-[-0.22px] whitespace-nowrap text-[#1d1f25]">
    <div className="flex h-[64px] shrink-0 border-b-[3px] border-[#c8c8c8] bg-[#eff1ee]">
      <div className={cols + " pt-0.5 text-[25.5px]"}>
        <div className="flex items-center border-r-2 border-[#bdbdbd] pl-[22px]">
          <CheckSquare />
          <span className="ml-[103px] font-serif text-[27px] text-[#444] italic">ƒ<span className="text-[18px]">x</span></span>
          <span className="ml-3.5 font-medium">检索词的组合</span>
          <Chev c="mr-[18px] ml-auto text-[#666]" />
        </div>
        <Head icon={<LookupIcon />} t="J2 检索词" c="pl-3" />
        <Head icon={<SpiralIcon />} t="Final term" c="pl-[13px]" />
        <Head icon={<PointerIcon />} t="Pubmed Button" c="pl-[13px]" />
        <Head icon={<PointerIcon />} t="Open Geen..." c="pl-[13px]" />
        <Head icon={<LookupIcon />} t="J4 检索结果" c="pl-3" />
        <Head icon={<CreatorIcon />} t="Created By" c="pl-[14px]" />
      </div>
    </div>
    <div className={cols + " h-[46px] border-b-2 border-[#d5d8d8] bg-white"}>
      <div className="border-r-2 border-[#bdbdbd]" /><div className="border-r-2 border-[#e6e6e6]" />
      <div className="border-r-2 border-[#e6e6e6] pl-[12px] leading-[36px] text-[#111]">III[Title/Abstract])OR(MIMIC III ...</div>
      <div className="border-r-2 border-[#e6e6e6]" /><div className="border-r-2 border-[#e6e6e6]" /><div className="border-r-2 border-[#e6e6e6]" /><div className="border-r-2 border-[#d8d8d8]" />
    </div>
    {rows.map((r) => <GridRow key={r.n} r={r} />)}
    <div className="flex h-[62px] w-[3160px] shrink-0 border-r-2 border-b-2 border-[#d5d8d8] bg-white">
      <div className="flex w-[563px] items-center border-r-2 border-[#bdbdbd] pl-[18px]"><Plus className="size-[31px] text-[#444]" strokeWidth={1.600} /></div>
    </div>
    <div className="flex h-[232px] shrink-0 border-b-2 border-[#d5dada]"><div className="w-[563px] border-r-2 border-[#bdbdbd] bg-[#fafaf6]" /></div>
    <div className="flex grow bg-[linear-gradient(#fafafa,#dedede)]">
      <div className="w-[563px] border-r-2 border-[#bdbdbd] pt-2 pl-[15px] text-[22px]">10 records</div>
    </div>
    <div className="absolute top-[1365px] left-[15px] flex h-[72px] w-[267px] items-center rounded-full border-2 border-[#dedede] bg-white text-[26px]">
      <Box c="h-full w-[92px] border-r-2 border-[#dedede] pl-1.5"><Plus className="size-8 text-[#333]" strokeWidth={1.500} /></Box>
      <WandSparkles className="ml-[25px] size-[30px] text-[#333]" strokeWidth={1.600} />
      <span className="ml-[15px] text-[#333]">Add...</span>
    </div>
    <div className="absolute top-[763px] right-[6px] h-[657px] w-4 rounded-full bg-[#9d9d9b]" />
    <div className="absolute -left-20 bottom-[5px] h-[17px] w-[3090px] rounded-r-lg bg-[#949494]" />
    <Box c="absolute top-[474px] right-0 h-[72px] w-[70px] rounded-l-full bg-[linear-gradient(135deg,#f5b8d8,#ea7fb0)] pl-2 shadow-xl"><TranslateMark c="size-9" /></Box>
  </div>
);

/* ---------- dock ---------- */

const Tile = ({ c, children }: { c: string } & Kids) => (
  <div className={"relative flex h-[56px] w-[56px] shrink-0 items-center justify-center rounded-[13px] shadow-md shadow-black/40 " + c}>{children}</div>
);
const Svg = ({ c, v = "0 0 56 56", children }: { c?: string; v?: string } & Kids) => (
  <svg viewBox={v} className={"shrink-0 " + (c ?? "size-14")} fill="none">{children}</svg>
);
const Badge = ({ children }: Kids) => (
  <div className="absolute -top-1.5 -right-2 flex h-[26px] min-w-[26px] items-center justify-center rounded-full bg-[#e8282d] px-0.5 text-[16px] text-white">{children}</div>
);
const Arrowhead = () => (
  <Svg c="h-[70px] w-[70px]" v="0 0 70 70"><path d="M2 1l67 35H14Q12 14 2 1z" fill="#1fa3ee" /><path d="M2 69l67-33H14Q12 58 2 69z" fill="#1487f4" /><path d="M2 1q14 16 14 35H2z" fill="#19c2d0" /><path d="M2 69q14-14 14-33H2z" fill="#0a50d8" /></Svg>
);

type App = { n: React.ReactNode; dot?: boolean };
const apps: App[] = [
  { dot: true, n: <Tile c="overflow-hidden bg-[linear-gradient(#2fa8fb,#1268ee)]"><Svg><path d="M32 0h24v56H34q-3-9-3-18h-9q1-20 10-38z" fill="#dfe6ee" /><path d="M15 17v5M42 17v5M11 35q17 16 34 0" stroke="#1b2b44" strokeWidth="2.500" strokeLinecap="round" /></Svg></Tile> },
  { n: <Tile c="bg-[#b9bcc1]"><div className="grid grid-cols-3 gap-1">{["bg-[#36d14b]", "bg-[#fcb614]", "bg-[#fb7a1e]", "bg-[#d81f2a]", "bg-[#9da1a7]", "bg-[#e9355e]", "bg-[#9a3ad4]", "bg-[#2d8cf5]", "bg-[#26c78a]"].map((c) => <div key={c} className={"size-2.5 rounded-[3px] " + c} />)}</div></Tile> },
  { n: <div className="grid h-[54px] w-[60px] shrink-0 grid-cols-2 gap-0.5 rounded bg-[#8fe0fb]"><i className="bg-[#2cb6ef]" /><i className="bg-[#27a2ea]" /><i className="bg-[#2792e6]" /><i className="bg-[#2a6fdc]" /></div> },
  { n: <Tile c="bg-white"><Svg><ellipse cx="28" cy="30" rx="15" ry="20" fill="#111" /><ellipse cx="28" cy="17" rx="11" ry="13" fill="#111" /><ellipse cx="28" cy="38" rx="10" ry="12" fill="#fff" /><path d="M14 26q14 6 28 0v5q-14 6-28 0z" fill="#e32626" /><path d="M19 29h6v9h-5z" fill="#e32626" /><circle cx="24" cy="15" r="3" fill="#fff" /><circle cx="32" cy="15" r="3" fill="#fff" /><ellipse cx="28" cy="21" rx="7" ry="2.500" fill="#f5a417" /><path d="M15 49h12v3H14zM29 49h12l1 3H29z" fill="#f5a417" /></Svg></Tile> },
  { dot: true, n: <Tile c="bg-[linear-gradient(#1aa7f5,#1868e8)]"><Svg><path d="M31 12L17 42M25 12l16 30M9 35h22M39 35h8" stroke="#f2f8ff" strokeWidth="4.500" strokeLinecap="round" /></Svg></Tile> },
  { n: <Tile c="bg-[linear-gradient(#c9d2da,#77736c)]"><Svg><circle cx="28" cy="28" r="22" fill="#8d8f92" stroke="#33353a" strokeWidth="5" strokeDasharray="2 1.500" /><circle cx="28" cy="28" r="15" stroke="#33353a" strokeWidth="3" /><path d="M28 28h15M28 28l-8-13M28 28l-8 13" stroke="#33353a" strokeWidth="4" /><circle cx="28" cy="28" r="4" fill="#33353a" /></Svg><Badge>1</Badge></Tile> },
  { dot: true, n: <Tile c="flex-col overflow-hidden bg-[#f6f4f2]"><div className="h-[18px] w-full shrink-0 bg-[#e8383b] text-center text-[12px] leading-[18px] text-white">2月</div><div className="grow text-[29px] leading-[37px] text-[#333]">15</div></Tile> },
  { dot: true, n: <Tile c="bg-white"><Svg><circle cx="28" cy="28" r="22" fill="#1b7fc8" /><path d="M7 24Q12 6 30 6q18 2 20 20 0 10-12 10-7-1-4-6 2-10-8-12-12-2-19 6z" fill="#3fd08a" /><path d="M7 24q8-8 18-6-10 8-5 20 8 12 22 6-12 12-25 3Q6 40 7 24z" fill="#0d4e9e" /><path d="M25 22q-5 8 0 14 6 6 17 4-10 2-10-4 4-4 2-9-3-6-9-5z" fill="#fff" /></Svg></Tile> },
  { dot: true, n: <Tile c="bg-white"><Svg><circle cx="28" cy="28" r="24" fill="#fbc116" /><path d="M28 28L7.200 16A24 24 0 0 1 48.800 16z" fill="#e33b2e" /><path d="M7.200 16A24 24 0 0 0 28 52l10-18-10-6z" fill="#2da14d" /><circle cx="28" cy="28" r="12" fill="#fff" /><circle cx="28" cy="28" r="9" fill="#2b74ea" /></Svg></Tile> },
  { dot: true, n: <Tile c="bg-[#22c15b]"><FaWeixin className="size-11 text-white" /><Badge>85</Badge></Tile> },
  { dot: true, n: <Svg c="h-[58px] w-[56px]"><path d="M3 7l7-5h34l9 8v40l-5 5-36-2-9-9z" fill="#fff" stroke="#222" strokeWidth="2.500" /><path d="M12 13h41M3 7l9 6v40" stroke="#222" strokeWidth="3" /><path d="M23 46V22l18 24V20M19 22h7M37 20h8M19 46h8" stroke="#111" strokeWidth="4" /></Svg> },
  { dot: true, n: <Tile c="bg-white"><Svg><path d="M9 17h38M12 18l8 23 9-20 6 20 10-23M20 41l5-15" stroke="#e5281e" strokeWidth="5" strokeLinejoin="round" /></Svg></Tile> },
  { dot: true, n: <Tile c="bg-white"><Svg><path d="M32 4l9 16 1 16-7 16-17-10-5-12 4-17z" fill="#6a52d6" /><path d="M32 4l-10 22 13 26-17-10-5-12 4-17z" fill="#43318f" /></Svg></Tile> },
  { n: <Tile c="bg-white"><Svg><g strokeWidth="6.500" strokeLinecap="round"><path d="M24 12v1M12 24h12" stroke="#36c5f0" /><path d="M33 12v12M44 24h-1" stroke="#2eb67d" /><path d="M33 44v-1M33 33h11" stroke="#ecb22e" /><path d="M24 33v11M12 33h1" stroke="#e01e5a" /></g></Svg></Tile> },
  { dot: true, n: <Tile c="-rotate-1 bg-[#f7f7f7] font-serif text-[42px] leading-none text-[#222]">T</Tile> },
  { n: <Svg c="size-[64px]"><path d="M29 2l22 14-22 12L7 16z" fill="#fcc10e" stroke="#fff" strokeWidth="3" /><path d="M3 18l20 11L3 42z" fill="#e0344b" stroke="#fff" strokeWidth="3" /><path d="M31 29l22-11v24L31 54z" fill="#2bbff2" stroke="#fff" strokeWidth="3" /></Svg> },
  { dot: true, n: <Tile c="border-2 border-[#8b8d90] bg-[#1b1b1c]"><Svg><path d="M9 12l5 4-5 4M17 21h7" stroke="#eee" strokeWidth="2" /></Svg></Tile> },
  { n: <Tile c="bg-[#f2e56f]"><Svg><path d="M10 22q4-16 6-6t4 2 5 1 5-3h6M9 28h38M9 38h22" stroke="#b3a237" strokeWidth="2.500" /></Svg></Tile> },
  { dot: true, n: <Tile c="flex-col justify-start overflow-hidden bg-[#f3f1ee]"><div className="h-[15px] w-full bg-[#fcc21b]" /><div className="mt-3 h-0.5 w-full bg-[#dcdad6]" /><div className="mt-2 h-0.5 w-full bg-[#dcdad6]" /></Tile> },
  { n: <Tile c="bg-white"><Svg><circle cx="22" cy="35" r="14" fill="#ff5a3c" /><rect x="20" y="7" width="30" height="28" rx="3" fill="#22c3e6" /><path d="M8 32q8-12 9-1t5 0 6-6 4 6 6-3 4 2 8-3" stroke="#112" strokeWidth="3.200" /></Svg></Tile> },
  { n: <Tile c="border-[5px] border-[#27408f] bg-[#f1f3f6]"><Svg><path d="M8 12h26M8 24h26M8 34h26M8 44h20" stroke="#c3c8d0" strokeWidth="6" strokeLinecap="round" /><path d="M50-4l4 8-18 44-6 4 1-8z" fill="#e9edf2" stroke="#556" strokeWidth="2" /></Svg></Tile> },
  { dot: true, n: <Svg c="size-[66px]"><rect x="1" y="5" width="50" height="36" fill="#222" /><rect x="3" y="7" width="44" height="28" fill="#2193da" /><path d="M1 38h50v6H1zM18 44h14l2 8H16z" fill="#cfd2d6" /><path d="M36 1v54M49 1v54" stroke="#df1f2a" strokeWidth="7" strokeLinecap="round" /></Svg> },
  { n: <Svg><path d="M4 54V5h50M14 16h38M16 16v8M20 24h6v30M36 22v30h-8M50 22v24h-8M18 54h8" stroke="#4f93e6" strokeWidth="5.500" /></Svg> },
  { n: <Svg c="size-[66px]"><path d="M18 8h18l18 42H2z" fill="#38a9ef" /><path d="M28 8h8l18 42H40z" fill="#f2426a" /><path d="M18 8h14l-4 22z" fill="#7fe05c" /><path d="M32 8l8 18-12 4z" fill="#f7d34a" /><path d="M28 30l12 20H24z" fill="#7a5fe8" /></Svg> },
  { dot: true, n: <Tile c="bg-white"><Svg><path d="M20 9h26v38H20z" fill="#a63fd9" /><path d="M36 9h10v38H36z" fill="#c76ff0" /><rect x="4" y="17" width="22" height="22" rx="2" fill="#6a1b9a" /><path d="M11 34V22l8 12V22" stroke="#fff" strokeWidth="2.800" /></Svg></Tile> },
  { n: <Tile c="bg-[#fa0f1e]"><Svg><path d="M11 38l4-20M19 40l4-24M27 40l4-24M35 34l3-16M36 42l3-8M41 32h3l3-14" stroke="#fff" strokeWidth="5" /></Svg></Tile> },
  { n: <Tile c="bg-white"><Box c="size-[46px] rounded-full bg-[#6d9bd1] font-serif text-[32px] text-white">R</Box></Tile> },
  { n: <Tile c="bg-[#e9ebee]"><Svg><circle cx="28" cy="28" r="24" fill="#1d90ee" /><circle cx="28" cy="28" r="21" stroke="#9fd2ff" strokeWidth="2" strokeDasharray="1 3" /><path d="M43 12L25 25l6 6z" fill="#f03b30" /><path d="M13 44l12-19 6 6z" fill="#f4f6f8" /></Svg></Tile> },
  { n: <Tile c="bg-[#2b0303] text-[33px] font-semibold text-[#ff9a1a]">Ai</Tile> },
  { n: <Tile c="rounded-full bg-[#4d4fe0]"><Svg><path d="M24 30q-10-2-11 6 0 8 7 8t8-8V20q0-8 8-8t7 8q-1 8-9 7" stroke="#fff" strokeWidth="4.500" strokeLinecap="round" /></Svg></Tile> },
  { n: <Svg c="size-[64px]"><path d="M28 1l24 12v30L28 55 4 43V13z" fill="#b8b8ba" stroke="#777" strokeWidth="2" /><path d="M16 12h24v7L25 37h15v8H15v-7l15-18H16z" fill="#c4161f" /></Svg> },
  { dot: true, n: <Tile c="bg-white"><Svg><circle cx="32" cy="28" r="19" fill="#e0512e" /><path d="M32 9a19 19 0 0 1 19 19H32z" fill="#f4906f" /><rect x="5" y="18" width="21" height="21" rx="2" fill="#b53117" /><path d="M12 35V23h5q4 0 4 4t-4 4h-5" stroke="#fff" strokeWidth="2.800" /></Svg></Tile> },
  { n: <Tile c="scale-105 rounded-full bg-[linear-gradient(#ff6a5e,#ffb01f)]"><Svg><path d="M19 14l22 14-22 14z" fill="#fffbe2" stroke="#ffd75a" strokeWidth="3" /></Svg></Tile> },
  { n: <Arrowhead /> },
  { n: <Arrowhead /> },
  { dot: true, n: <Tile c="bg-white"><Svg><circle cx="28" cy="19" r="8" stroke="#e8414a" strokeWidth="5" /><circle cx="17" cy="33" r="8" stroke="#2a9ff0" strokeWidth="5.500" /><circle cx="39" cy="33" r="8" stroke="#2a9ff0" strokeWidth="5.500" /><path d="M20 53h8" stroke="#e8414a" strokeWidth="3" /><path d="M28 53h8" stroke="#2a6fe8" strokeWidth="3" /></Svg></Tile> },
  { n: <Svg c="h-[66px] w-[68px]"><path d="M0 56V22q8 10 10 34zM14 56q6-44 24-34 16 14 18 34z" fill="#a993a8" /><path d="M22 24L32 2l-3 26zM42 12l9-10-2 24z" fill="#3f62c9" /><path d="M16 56q8-38 20-32l-8 32zM36 56q0-26 6-30l6 4-6 26z" fill="#4c68b8" opacity=".7" /></Svg> },
  { n: <Svg c="size-[62px]"><path d="M28 2l24 13v27L28 55 4 42V15z" fill="#fff" /><path d="M28 7l19 10v22L28 50 9 39V17zM38 22l-10-6-11 6v13l11 6 11-6V29M28 22l6 4v6l-6 4-6-4v-6z" stroke="#111" strokeWidth="3.500" /></Svg> },
  { dot: true, n: <Svg c="size-[66px]"><path d="M4 16l40-8 6 38-36 8z" fill="#e9eaec" /><text x="15" y="42" fontSize="26" fill="#444">⌘</text><path d="M52 10L36 54" stroke="#222" strokeWidth="5" /><path d="M53 8l-3 9" stroke="#fff" strokeWidth="5" /></Svg> },
  { n: <Tile c="bg-[#04182a] text-[30px] font-semibold text-[#35a8fb]">Ps</Tile> },
  { n: <Tile c="bg-[linear-gradient(#3f97fb,#1c68ea)]"><Svg><path d="M6 46Q2 20 22 8q22-4 28 18-8-8-16-2-6 10 4 24-16 8-26 4z" fill="#e4f1ff" /><path d="M14 46q0-20 14-28-4 18 6 30-10 6-20-2z" fill="#9ccbfb" /></Svg></Tile> },
];

const recents: App[] = [
  { dot: true, n: <Tile c="bg-white"><Svg><path d="M17 9h32v38H17z" fill="#2b7cd3" /><path d="M17 28h32v19H17z" fill="#185abd" /><rect x="4" y="18" width="22" height="22" rx="2" fill="#10489b" /><path d="M9 23l3 12 3-10 3 10 3-12" stroke="#fff" strokeWidth="2.400" /></Svg></Tile> },
  { dot: true, n: <Tile c="bg-[linear-gradient(135deg,#e8a548,#a66a24)]"><Box c="size-[46px] rounded-full bg-[#1a1410]"><Svg c="size-9"><path d="M12 34q-8-10 4-16 6-14 18-4 14 2 12 14-2 8-8 8" stroke="#f0d0a0" strokeWidth="4" /><circle cx="21" cy="39" r="5" stroke="#e8a548" strokeWidth="4" /><path d="M26 39h16v6" stroke="#e8a548" strokeWidth="4" /></Svg></Box></Tile> },
  { dot: true, n: <Tile c="border-2 border-white bg-[linear-gradient(#8fb8f0_0%,#a8c8f4_55%,#30507c_56%,#dfe3e8_85%)]"><Svg><path d="M34 32h14l6 24H28z" fill="#d9dde2" /><rect x="32" y="26" width="20" height="10" rx="3" fill="#1a1a1c" /></Svg></Tile> },
  { dot: true, n: <Tile c="bg-white"><Svg><circle cx="28" cy="28" r="23" stroke="#d0418c" strokeWidth="2" /><path d="M6 34a23 23 0 0 0 44 0" stroke="#2a8ff0" strokeWidth="2" /><path d="M17 22v18M17 13v5M25 16v18q0 6 6 6h4V16" stroke="#1676e8" strokeWidth="6" /></Svg></Tile> },
  { dot: true, n: <Tile c="bg-[linear-gradient(#4a4c50,#17181b)]"><Svg><circle cx="27" cy="27" r="21" fill="#dbe0e6" /><circle cx="27" cy="27" r="13" fill="#1c93ee" /><path d="M32 34l12 16" stroke="#c3c8ce" strokeWidth="9" /></Svg></Tile> },
  { dot: true, n: <Tile c="bg-white"><Svg><circle cx="28" cy="28" r="22" fill="#fcd10c" /><path d="M40 6q-12 2-10 10l4 22" stroke="#16a85a" strokeWidth="6" /><circle cx="26" cy="38" r="9" fill="#16a85a" /></Svg></Tile> },
  { dot: true, n: <Tile c="bg-white"><Svg><circle cx="28" cy="28" r="24" fill="#b9bcc4" /><circle cx="20" cy="16" r="6" fill="#33363c" /><circle cx="36" cy="14" r="6" fill="#33363c" /><circle cx="14" cy="30" r="6" fill="#33363c" /><path d="M10 44L50 18l2 12-34 22z" fill="#2a2420" /><path d="M18 42l12-8 3 6-12 8z" fill="#f0862c" /><path d="M30 34l12-8 3 6-12 8z" fill="#b24ad0" /></Svg></Tile> },
];

const folders: App[] = [
  { n: <Svg c="h-[56px] w-[66px]" v="0 0 66 56"><path d="M2 8q0-4 4-4h18l6 6h30q4 0 4 4v36q0 4-4 4H6q-4 0-4-4z" fill="#3ba5e0" /><path d="M2 18h62v32q0 4-4 4H6q-4 0-4-4z" fill="#62c1f3" /><circle cx="33" cy="34" r="10" fill="#3ba0dc" /><path d="M33 28v11M28 35l5 5 5-5" stroke="#8ed4f8" strokeWidth="2.500" /></Svg> },
  { n: <Svg c="h-[62px] w-[56px]" v="0 0 56 62"><path d="M2 4h20l5 5h25v46H2z" fill="#4db2ea" /><path d="M7 8h28l12 12v41H7z" fill="#fafafa" /><path d="M35 8v12h12z" fill="#cfd2d6" /><text x="11" y="46" fontSize="31" fill="#274a8c">@</text></Svg> },
  { n: <Svg c="h-[64px] w-[54px]" v="0 0 54 64"><path d="M8 10l6-8 8 5 8-6 8 6 6-2 3 9z" fill="#bfc4c2" /><path d="M3 11h48l-7 48q-1 4-5 4H15q-4 0-5-4z" fill="#e4e5e6" /><path d="M3 11h48M14 16l4 44M27 16v45M40 16l-4 44" stroke="#c0c2c4" strokeWidth="2" /></Svg> },
];

const DockCell = ({ a, bar }: { a: App; bar?: boolean }) => (
  <div className="flex w-[71.75px] shrink-0 flex-col items-center">
    <div className="flex h-[75px] w-[56px] items-center justify-center pt-1">{a.n}</div>
    {a.dot && <div className="mt-0.5 size-[8px] rounded-full bg-[#150508]" />}
    {bar && <div className="mt-0.5 h-[8px] w-[68px] rounded bg-[#4a0405]" />}
  </div>
);

const Dock = () => (
  <div className="mt-[9px] ml-14 flex h-[90px] w-[3729px] shrink-0 overflow-visible rounded-[26px] border-2 border-white/25 bg-[linear-gradient(90deg,#414c54_0%,#4b4f58_12%,#5f4654_17%,#7a3f50_22%,#85435a_30%,#a04a48_38%,#8c4558_46%,#824460_55%,#8f4270_64%,#87415c_75%,#a34650_83%,#b54644_92%,#cd4630_100%)] pl-[2px] font-[Inter,'Noto_Sans_CJK_SC',sans-serif]">
    {apps.map((a, i) => <DockCell key={i} a={a} />)}
    <div className="mt-2.5 ml-[17px] h-16 w-0.5 shrink-0 bg-black/40" />
    <div className="ml-[13px] flex">{recents.map((a, i) => <DockCell key={i} a={a} />)}</div>
    <div className="mt-2.5 ml-[17px] h-16 w-0.5 shrink-0 bg-black/40" />
    <div className="ml-[13px] flex">{folders.map((a, i) => <DockCell key={i} a={a} bar={i === 1} />)}</div>
  </div>
);

/* ---------- page ---------- */

export default function App() {
  return (
    <div className="relative flex h-[2160px] w-[3840px] flex-col overflow-hidden bg-[linear-gradient(90deg,#010d16_0%,#020c15_16%,#2b0a1e_19%,#2a0719_48%,#1c040f_70%,#3a0710_88%,#6d120b_96%,#8c1a0c_100%)] font-[Inter,'Noto_Sans_CJK_SC',sans-serif]">
      <div className="absolute top-0 right-0 h-[2060px] w-14 bg-[linear-gradient(180deg,#5c1a1c_2%,#d9401f_8%,#c8351a_20%,#a81f13_32%,#8a1010_50%,#7d0c0e_64%,#c44a0c_66%,#b93f0c_75%,#9c1f0c_88%,#7e140b_100%)]" />
      <MenuBar />
      <div className="relative mt-0.5 flex h-[2001px] w-[3797px] shrink-0 flex-col overflow-hidden rounded-t-[22px] rounded-b-[20px] bg-white shadow-2xl shadow-black">
        <TabStrip />
        <AddressBar />
        <Bookmarks />
        <BaseHeader />
        <TableTabs />
        <ViewBar />
        <div className="flex grow overflow-hidden">
          <Sidebar />
          <DataGrid />
        </div>
        <div className="absolute bottom-0 left-0 flex h-[41px] w-[1263px] items-center overflow-hidden rounded-tr-lg bg-[linear-gradient(90deg,#cfced9,#c3ccd0_40%,#c4c4cf)] pl-2.5 text-[24px] tracking-[-0.16px] whitespace-nowrap text-[#33363a] shadow-[0_-1px_5px_#888]">
          https://pubmed.ncbi.nlm.nih.gov/?term=%28%28Sepsis%5BMeSH Terms%5D%29OR%28Bloodstream Infe...
        </div>
      </div>
      <Dock />

      <div className="absolute top-[494px] left-[259px] h-[375px] w-[1048px] border-[18px] border-[#ff0000]" />
      <div className="absolute top-[588px] left-[1346px] text-[91px] leading-[130px] font-bold whitespace-nowrap text-[#ff2a0a]">你好</div>
      <div className="absolute top-[1699px] left-[1895px] flex h-[321px] w-[1683px] flex-col justify-center rounded-[20px] bg-[#232323]/90 pl-7 font-[Lato,'Noto_Sans_CJK_SC',sans-serif] text-[96px] leading-[134px] whitespace-nowrap text-white">
        <div className="h-[134px]"><span className="text-[88px]">1.</span>直接打开<span className="text-[88px]">pubmed</span>进行检索或者</div>
        <div className="h-[134px]">使用上一期视频构建的<span className="text-[88px]">airtable</span>检索词库</div>
      </div>
      <svg viewBox="0 0 30 34" className="absolute top-[1306px] left-[2290px] h-[34px] w-[30px]" fill="#18e817" stroke="#0b3a0a" strokeWidth="2" strokeLinejoin="round">
        <path d="M7 3q3-2 4 1l3 10 12 1q3 1 2 6l-3 12H12L3 21q-2-4 2-3l5 4z" /><path d="M15 20l1 6M20 20v6M24 20v6" />
      </svg>
    </div>
  );
}
